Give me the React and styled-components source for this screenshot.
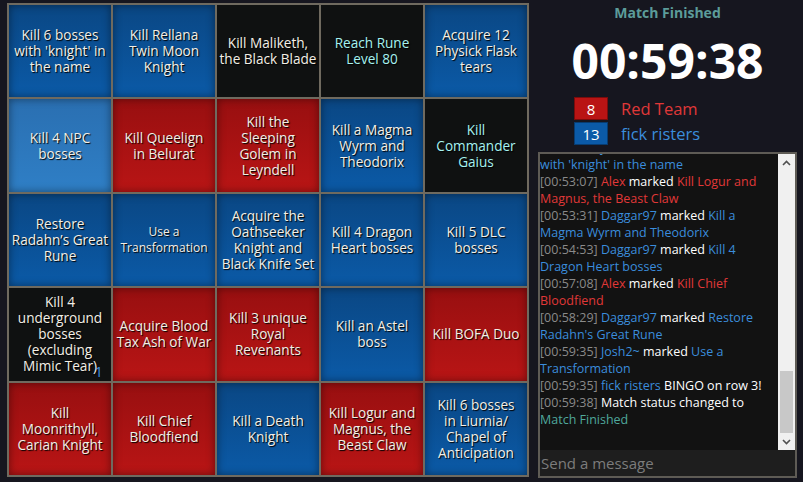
import React from 'react';
import styled, { createGlobalStyle } from 'styled-components';

const GlobalStyle = createGlobalStyle`
  html, body {
    margin: 0;
    padding: 0;
    background: #16161f;
  }
  body {
    font-family: "Open Sans", "Noto Sans", sans-serif;
  }
`;

const Page = styled.div`
  display: flex;
  width: 803px;
  height: 482px;
  padding: 3px 6px 4px 7px;
  box-sizing: border-box;
  gap: 9px;
`;

const Board = styled.div`
  display: grid;
  grid-template-columns: repeat(5, 102px);
  grid-template-rows: repeat(5, 1fr);
  gap: 2px;
  width: 522px;
  height: 474px;
  box-sizing: border-box;
  border: 2px solid #6f6a5f;
  background: #6f6a5f;
`;

const tones = {
  blue: 'linear-gradient(to bottom, #0a4784, #0b5aa7)',
  light: 'linear-gradient(to bottom, #2a6fb1, #2f7fc6)',
  red: 'linear-gradient(to bottom, #980f10, #b91515)',
  black: '#0f1111',
};

const Cell = styled.div`
  position: relative;
  display: flex;
  align-items: center;
  justify-content: center;
  text-align: center;
  white-space: pre;
  font-size: ${(p) => (p.$small ? '12px' : '13.6px')};
  line-height: 16px;
  color: ${(p) => (p.$cyan ? '#a6f2f0' : '#f3efe6')};
  text-shadow: 1px 1px 1px #000;
  background: ${(p) => tones[p.$tone]};
  box-shadow: ${(p) => (p.$tone === 'black' ? 'none' : 'inset 0 0 8px rgba(0,0,0,0.45)')};
`;

const Marker = styled.span`
  position: absolute;
  right: 8px;
  bottom: 2px;
  color: #3a8ad8;
  font-size: 15px;
  text-shadow: none;
`;

const Side = styled.div`
  flex: 1;
  display: flex;
  flex-direction: column;
  align-items: center;
  min-width: 0;
`;

const Status = styled.div`
  margin-top: 1px;
  color: #5c9c9a;
  font-weight: 700;
  font-size: 14px;
  line-height: 18px;
`;

const Timer = styled.div`
  margin-top: 14px;
  color: #fff;
  font-weight: 700;
  font-size: 48px;
  line-height: 50px;
`;

const Teams = styled.div`
  align-self: flex-start;
  margin: 11px 0 0 36px;
  display: flex;
  flex-direction: column;
  gap: 2px;
`;

const TeamRow = styled.div`
  display: flex;
  align-items: center;
  gap: 13px;
`;

const Score = styled.div`
  width: 34px;
  height: 23px;
  box-sizing: border-box;
  display: flex;
  align-items: center;
  justify-content: center;
  color: #fff;
  font-size: 15px;
  background: ${(p) => (p.$team === 'red' ? '#b91414' : '#0b5aa7')};
  border: 1px solid ${(p) => (p.$team === 'red' ? '#7a0c0c' : '#083c70')};
`;

const TeamName = styled.div`
  font-size: 16.5px;
  color: ${(p) => (p.$team === 'red' ? '#e03838' : '#3b8ddc')};
`;

const Chat = styled.div`
  margin-top: 7px;
  align-self: stretch;
  flex: 1;
  min-height: 0;
  display: flex;
  flex-direction: column;
  border: 2px solid #5e5b55;
  background: #121212;
`;

const Log = styled.div`
  flex: 1;
  min-height: 0;
  display: flex;
`;

const Messages = styled.div`
  flex: 1;
  min-width: 0;
  overflow: hidden;
  display: flex;
  flex-direction: column;
  justify-content: flex-end;
  padding: 0 2px 22px 0;
  font-size: 12.5px;
  line-height: 17px;
  color: #fff;
`;

const Msg = styled.div``;

const colors = {
  time: '#8a8a8a',
  red: '#e03838',
  blue: '#3b8ddc',
  teal: '#4fa89c',
  plain: '#ffffff',
};

const Part = styled.span`
  color: ${(p) => colors[p.$c]};
`;

const ScrollBar = styled.div`
  width: 17px;
  display: flex;
  flex-direction: column;
  background: #f0f0f0;
`;

const Arrow = styled.div`
  height: 17px;
  display: flex;
  align-items: center;
  justify-content: center;
`;

const Track = styled.div`
  flex: 1;
  display: flex;
  flex-direction: column;
  justify-content: flex-end;
`;

const Thumb = styled.div`
  height: 62px;
  margin: 0 2px;
  background: #c8c8c8;
`;

const Input = styled.input`
  height: 26px;
  border: none;
  outline: none;
  background: #1e1e1e;
  color: #ddd;
  font-family: inherit;
  font-size: 15px;
  padding: 0 1px;
  &::placeholder {
    color: #7c7c7c;
  }
`;

const cells = [
  ['Kill 6 bosses\nwith \'knight\' in\nthe name', 'blue'],
  ['Kill Rellana\nTwin Moon\nKnight', 'blue'],
  ['Kill Maliketh,\nthe Black Blade', 'black'],
  ['Reach Rune\nLevel 80', 'black', { cyan: true }],
  ['Acquire 12\nPhysick Flask\ntears', 'blue'],
  ['Kill 4 NPC\nbosses', 'light'],
  ['Kill Queelign\nin Belurat', 'red'],
  ['Kill the\nSleeping\nGolem in\nLeyndell', 'red'],
  ['Kill a Magma\nWyrm and\nTheodorix', 'blue'],
  ['Kill\nCommander\nGaius', 'black', { cyan: true }],
  ['Restore\nRadahn’s Great\nRune', 'blue'],
  ['Use a\nTransformation', 'blue', { small: true }],
  ['Acquire the\nOathseeker\nKnight and\nBlack Knife Set', 'blue'],
  ['Kill 4 Dragon\nHeart bosses', 'blue'],
  ['Kill 5 DLC\nbosses', 'blue'],
  ['Kill 4\nunderground\nbosses\n(excluding\nMimic Tear)', 'black', { marker: '1' }],
  ['Acquire Blood\nTax Ash of War', 'red'],
  ['Kill 3 unique\nRoyal\nRevenants', 'red'],
  ['Kill an Astel\nboss', 'blue'],
  ['Kill BOFA Duo', 'red'],
  ['Kill\nMoonrithyll,\nCarian Knight', 'red'],
  ['Kill Chief\nBloodfiend', 'red'],
  ['Kill a Death\nKnight', 'blue'],
  ['Kill Logur and\nMagnus, the\nBeast Claw', 'red'],
  ['Kill 6 bosses\nin Liurnia/\nChapel of\nAnticipation', 'blue'],
];

const log = [
  { t: '00:51:12', who: 'Josh2~', team: 'blue', text: 'Kill Rellana Twin Moon Knight' },
  { t: '00:52:44', who: 'Josh2~', team: 'blue', text: 'Kill 6 bosses with \'knight\' in the name' },
  { t: '00:53:07', who: 'Alex', team: 'red', text: 'Kill Logur and Magnus, the Beast Claw' },
  { t: '00:53:31', who: 'Daggar97', team: 'blue', text: 'Kill a Magma Wyrm and Theodorix' },
  { t: '00:54:53', who: 'Daggar97', team: 'blue', text: 'Kill 4 Dragon Heart bosses' },
  { t: '00:57:08', who: 'Alex', team: 'red', text: 'Kill Chief Bloodfiend' },
  { t: '00:58:29', who: 'Daggar97', team: 'blue', text: 'Restore Radahn\'s Great Rune' },
  { t: '00:59:35', who: 'Josh2~', team: 'blue', text: 'Use a Transformation' },
];

const Chevron = ({ up }) => (
  <svg width="9" height="6" viewBox="0 0 9 6">
    <path d={up ? 'M1 5 L4.5 1.5 L8 5' : 'M1 1 L4.5 4.5 L8 1'} fill="none" stroke="#505050" strokeWidth="1.6" />
  </svg>
);

export default function App() {
  return (
    <>
      <GlobalStyle />
      <Page>
        <Board>
          {cells.map(([text, tone, opts = {}], i) => (
            <Cell key={i} $tone={tone} $cyan={opts.cyan} $small={opts.small}>
              {text}
              {opts.marker && <Marker>{opts.marker}</Marker>}
            </Cell>
          ))}
        </Board>
        <Side>
          <Status>Match Finished</Status>
          <Timer>00:59:38</Timer>
          <Teams>
            <TeamRow>
              <Score $team="red">8</Score>
              <TeamName $team="red">Red Team</TeamName>
            </TeamRow>
            <TeamRow>
              <Score $team="blue">13</Score>
              <TeamName $team="blue">fick risters</TeamName>
            </TeamRow>
          </Teams>
          <Chat>
            <Log>
              <Messages>
                {log.map((m, i) => (
                  <Msg key={i}>
                    <Part $c="time">[{m.t}]</Part> <Part $c={m.team}>{m.who}</Part>{' '}
                    <Part $c="plain">marked</Part> <Part $c={m.team}>{m.text}</Part>
                  </Msg>
                ))}
                <Msg>
                  <Part $c="time">[00:59:35]</Part> <Part $c="blue">fick risters</Part>{' '}
                  <Part $c="plain">BINGO on row 3!</Part>
                </Msg>
                <Msg>
                  <Part $c="time">[00:59:38]</Part> <Part $c="plain">Match status changed to</Part>{' '}
                  <Part $c="teal">Match Finished</Part>
                </Msg>
              </Messages>
              <ScrollBar>
                <Arrow><Chevron up /></Arrow>
                <Track><Thumb /></Track>
                <Arrow><Chevron /></Arrow>
              </ScrollBar>
            </Log>
            <Input placeholder="Send a message" />
          </Chat>
        </Side>
      </Page>
    </>
  );
}
